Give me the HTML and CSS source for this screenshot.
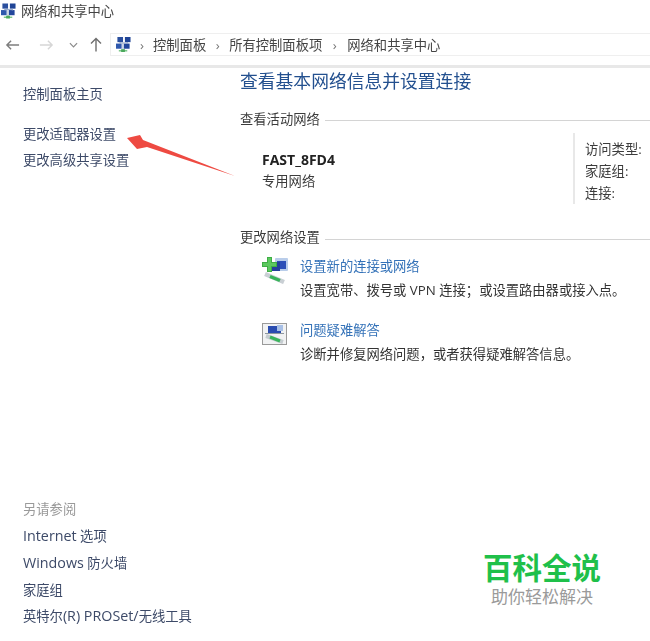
FILE: index.html
```html
<!DOCTYPE html>
<html lang="zh-CN">
<head>
<meta charset="utf-8">
<title>网络和共享中心</title>
<link rel="stylesheet" href="styles.css">
</head>
<body>
<svg class="defs" width="0" height="0" aria-hidden="true">
  <symbol id="net" viewBox="0 0 16 16">
    <rect x="1.500" y="0" width="6" height="5.500" fill="#2b4f9e"/>
    <rect x="9.500" y="0" width="6" height="5.500" fill="#1f4496"/>
    <rect x="0" y="7" width="6" height="5.500" fill="#2f58ad"/>
    <rect x="8.500" y="7" width="6" height="5.500" fill="#23479c"/>
    <path d="M4.500 5.500v2M12 5.500v2M3.500 6.300h9M7.500 6.300v7" stroke="#8fa3c6" stroke-width="1" fill="none"/>
    <path d="M3 14.700h9" stroke="#7cc98a" stroke-width="1.600"/>
    <rect x="5.500" y="13" width="4" height="3" fill="#4aa85c"/>
  </symbol>
</svg>
<div class="window">
  <header class="titlebar">
    <svg class="title-icon"><use href="#net"/></svg>
    <span>网络和共享中心</span>
  </header>
  <nav class="navbar">
    <svg class="nav-back" viewBox="0 0 16 12"><path d="M15 6H2M6.500 1.500 2 6l4.500 4.500" fill="none" stroke="#7d7d7d" stroke-width="1.500"/></svg>
    <svg class="nav-forward" viewBox="0 0 16 12"><path d="M1 6h13M9.500 1.500 14 6l-4.500 4.500" fill="none" stroke="#d6d6d6" stroke-width="1.500"/></svg>
    <svg class="nav-down" viewBox="0 0 10 6"><path d="M1 1l4 4 4-4" fill="none" stroke="#8a8a8a" stroke-width="1.300"/></svg>
    <svg class="nav-up" viewBox="0 0 12 15"><path d="M6 14.500V1.500M1 6.500l5-5 5 5" fill="none" stroke="#6e6e6e" stroke-width="1.400"/></svg>
    <div class="address">
      <svg class="addr-icon"><use href="#net"/></svg>
      <span class="chev chev-first">›</span>
      <span class="crumb">控制面板</span>
      <span class="chev">›</span>
      <span class="crumb">所有控制面板项</span>
      <span class="chev chev-wide">›</span>
      <span class="crumb">网络和共享中心</span>
    </div>
  </nav>
  <div class="content">
    <aside class="sidebar">
      <div class="side-top">
        <a class="side-link side-home">控制面板主页</a>
        <a class="side-link">更改适配器设置</a>
        <a class="side-link">更改高级共享设置</a>
      </div>
      <div class="side-bottom">
        <div class="side-label">另请参阅</div>
        <a class="side-link"><span class="latin">Internet</span> 选项</a>
        <a class="side-link"><span class="latin">Windows</span> 防火墙</a>
        <a class="side-link">家庭组</a>
        <a class="side-link">英特尔<span class="latin">(R) PROSet/</span>无线工具</a>
      </div>
    </aside>
    <main class="main">
      <h1 class="heading">查看基本网络信息并设置连接</h1>
      <div class="section-title"><span>查看活动网络</span><i></i></div>
      <section class="network">
        <div class="net-name">
          <strong>FAST_8FD4</strong>
          <span>专用网络</span>
        </div>
        <div class="net-props">
          <span>访问类型:</span>
          <span>家庭组:</span>
          <span>连接:</span>
        </div>
      </section>
      <div class="section-title section-change"><span>更改网络设置</span><i></i></div>
      <div class="task task-new">
        <svg class="task-icon" viewBox="0 0 26 27">
          <rect x="13" y="1" width="13" height="13" rx="1" fill="#b9cdea"/>
          <rect x="15" y="4" width="9" height="8" fill="#2d50b8"/>
          <rect x="9" y="5" width="9" height="9" fill="#24409e"/>
          <path d="M5 0h5v5h5v5h-5v5H5v-5H0V5h5z" fill="#3fae46"/>
          <path d="M6 1h3v5h5v3H9v5H6V9H1V6h5z" fill="#5cc95e"/>
          <path d="M3 17 22 25" stroke="#c9cfd4" stroke-width="4.500"/>
          <path d="M8 19.500 18 23.500" stroke="#38b45a" stroke-width="3.500"/>
        </svg>
        <div class="task-text">
          <a>设置新的连接或网络</a>
          <p>设置宽带、拨号或 VPN 连接<span class="punct">；</span>或设置路由器或接入点。</p>
        </div>
      </div>
      <div class="task">
        <svg class="task-icon task-icon-fix" viewBox="0 0 25 22">
          <rect x=".5" y=".5" width="24" height="21" fill="#f1f2f3" stroke="#9a9a9a"/>
          <rect x="6" y="3" width="13" height="7" fill="#2a4cb0"/>
          <rect x="15" y="2" width="6" height="6" fill="#a8c0e6"/>
          <path d="M3 10.500H22" stroke="#8e979f" stroke-width="1"/>
          <path d="M4 13 21 19" stroke="#c5ccd0" stroke-width="4"/>
          <path d="M8 14 18 18" stroke="#3ab55c" stroke-width="3"/>
        </svg>
        <div class="task-text">
          <a>问题疑难解答</a>
          <p>诊断并修复网络问题，或者获得疑难解答信息。</p>
        </div>
      </div>
    </main>
  </div>
</div>
<svg class="red-arrow" viewBox="0 0 112 45"><path d="M2 5 15 2 18 7 110 43 22 14 12 16z" fill="#ee4a42"/></svg>
<div class="watermark">
  <div class="wm-title">百科全说</div>
  <div class="wm-sub">助你轻松解决</div>
</div>
</body>
</html>
```
FILE: styles.css
```css
* { box-sizing: border-box; }
html, body { margin: 0; padding: 0; }
body {
  width: 650px;
  height: 641px;
  overflow: hidden;
  position: relative;
  background: #fff;
  color: #3c3c3c;
  font: 13.3px/20px "Open Sans", "Noto Sans CJK SC", sans-serif;
}
.defs { position: absolute; }
.window { display: flex; flex-direction: column; height: 100%; filter: blur(.35px); }
.latin { font-size: 14.300px; }
.punct { font-family: "Noto Sans CJK TC", sans-serif; }

.titlebar { display: flex; align-items: center; height: 21px; padding-left: 1px; gap: 5px; color: #444; }
.title-icon { width: 15px; height: 16px; margin-top: 1px; }

.navbar { display: flex; align-items: center; height: 47px; border-bottom: 3px solid #e8e8e8; padding: 3px 0 0 5px; }
.nav-back { width: 15px; height: 12px; }
.nav-forward { width: 15px; height: 12px; margin-left: 19px; }
.nav-down { width: 9px; height: 6px; margin-left: 15px; }
.nav-up { width: 12px; height: 15px; margin-left: 12px; }
.address { flex: 1; height: 23px; margin-left: 8px; padding-left: 5px; display: flex; align-items: center; border: 1px solid #efefef; border-right: 0; color: #444; }
.addr-icon { width: 15px; height: 17px; }
.chev { width: 23px; text-align: center; color: #777; }
.chev-first { width: 22px; }
.chev-wide { width: 25px; }

.content { flex: 1; display: flex; min-height: 0; }
.sidebar { width: 240px; padding: 0 0 8px 23px; display: flex; flex-direction: column; justify-content: space-between; }
.side-link { display: block; color: #3d4a68; white-space: nowrap; height: 26px; line-height: 20px; }
.side-top { padding-top: 16px; }
.side-home { margin-bottom: 14px; }
.side-bottom .side-link { height: 26.700px; }
.side-label { color: #9a9a9a; height: 27px; }

.main { flex: 1; min-width: 0; }
.heading { margin: 0; font-size: 17.800px; line-height: 26px; font-weight: 400; color: #23508f; }
.section-title { display: flex; align-items: center; gap: 5px; margin-top: 14.500px; height: 20px; color: #3c3c3c; }
.section-title i { flex: 1; height: 1px; background: #d4d4d4; margin-top: 4px; }
.section-change { margin-top: 23px; }

.network { display: flex; justify-content: space-between; margin-top: 4.500px; height: 71px; }
.net-name { display: flex; flex-direction: column; padding: 17px 0 0 22px; gap: 1px; }
.net-name strong { color: #222; font-size: 14px; font-weight: 700; line-height: 20px; }
.net-props { width: 77px; border-left: 2px solid #e8e8e8; padding: 6px 0 0 10px; display: flex; flex-direction: column; gap: 2px; white-space: nowrap; }

.task { display: flex; }
.task-new { margin-top: 9px; height: 64px; }
.task-icon { width: 26px; height: 27px; margin: 1px 12px 0 22px; flex: none; }
.task-icon-fix { width: 25px; height: 22px; margin: 3px 13px 0 22px; }
.task-text a { display: block; color: #3472b8; line-height: 20px; }
.task-text p { margin: 4px 0 0; line-height: 20px; color: #333; white-space: nowrap; }

.red-arrow { position: absolute; left: 125px; top: 133px; width: 112px; height: 45px; }
.watermark { position: absolute; left: 483px; top: 553px; width: 118px; text-align: center; font-family: "Liberation Sans", "Noto Sans CJK SC", sans-serif; }
.wm-title { color: #1fc04a; font-size: 29.500px; line-height: 32px; font-weight: 700; white-space: nowrap; }
.wm-sub { color: #9a9a9a; font-size: 17px; line-height: 22px; margin-top: 2px; white-space: nowrap; }
```
